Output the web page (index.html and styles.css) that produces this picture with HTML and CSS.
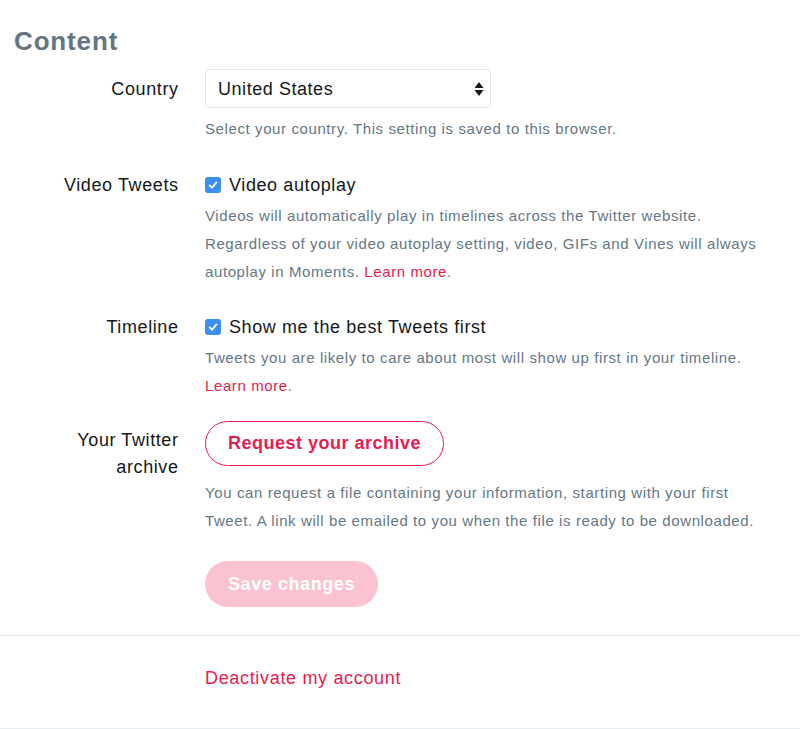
FILE: index.html
```html
<!DOCTYPE html>
<html>
<head>
<meta charset="utf-8">
<link rel="stylesheet" href="styles.css">
</head>
<body>
<div class="page">
  <h2 class="title">Content</h2>

  <div class="row row-country">
    <div class="label label-select">Country</div>
    <div class="field">
      <div class="select-wrap">
        <select class="select"><option>United States</option></select>
        <svg class="select-arrows" width="10" height="16" viewBox="0 0 10 16"><path d="M5 1 L9.5 7 H0.5 Z M5 15 L9.5 9 H0.5 Z" fill="#14171a"/></svg>
      </div>
      <p class="help help-first">Select your country. This setting is saved to this browser.</p>
    </div>
  </div>

  <div class="row row-video">
    <div class="label">Video Tweets</div>
    <div class="field">
      <label class="check">
        <span class="box"><svg width="12" height="12" viewBox="0 0 12 12"><path d="M2.6 6.3 L5 8.7 L9.4 3.4" fill="none" stroke="#fff" stroke-width="1.8" stroke-linecap="round" stroke-linejoin="round"/></svg></span>
        <span>Video autoplay</span>
      </label>
      <p class="help">Videos will automatically play in timelines across the Twitter website.<br>Regardless of your video autoplay setting, video, GIFs and Vines will always autoplay in Moments. <a class="link" href="#">Learn more</a>.</p>
    </div>
  </div>

  <div class="row row-timeline">
    <div class="label">Timeline</div>
    <div class="field">
      <label class="check">
        <span class="box"><svg width="12" height="12" viewBox="0 0 12 12"><path d="M2.6 6.3 L5 8.7 L9.4 3.4" fill="none" stroke="#fff" stroke-width="1.8" stroke-linecap="round" stroke-linejoin="round"/></svg></span>
        <span>Show me the best Tweets first</span>
      </label>
      <p class="help">Tweets you are likely to care about most will show up first in your timeline. <a class="link" href="#">Learn more</a>.</p>
    </div>
  </div>

  <div class="row row-archive">
    <div class="label label-archive">Your Twitter archive</div>
    <div class="field">
      <button class="btn-outline">Request your archive</button>
      <p class="help help-archive">You can request a file containing your information, starting with your first Tweet. A link will be emailed to you when the file is ready to be downloaded.</p>
      <button class="btn-save">Save changes</button>
    </div>
  </div>

  <div class="deactivate">
    <a class="link deactivate-link" href="#">Deactivate my account</a>
  </div>
</div>
</body>
</html>
```

FILE: styles.css
```css
html, body {
  margin: 0;
  padding: 0;
  background: #fff;
}
body {
  font-family: "Liberation Sans", Arial, sans-serif;
  color: #14171a;
  letter-spacing: 0.6px;
}
.page {
  width: 800px;
}
.title {
  margin: 0;
  padding: 25px 0 0 14px;
  font-size: 26px;
  line-height: 32px;
  font-weight: bold;
  color: #66757f;
  letter-spacing: 0.85px;
}
.row {
  display: grid;
  grid-template-columns: 178px 570px;
  column-gap: 27px;
}
.row-country { margin-top: 12px; }
.row-video { margin-top: 28px; }
.row-timeline { margin-top: 27px; }
.row-archive { margin-top: 21px; }
.label {
  text-align: right;
  font-size: 18px;
  line-height: 28px;
  margin-right: -0.6px;
}
.label-select {
  padding-top: 6px;
}
.label-archive {
  padding: 6px 0 0 60px;
  line-height: 27px;
}
.select-wrap {
  position: relative;
  width: 286px;
}
.select {
  -webkit-appearance: none;
  appearance: none;
  width: 286px;
  height: 39px;
  box-sizing: border-box;
  border: 1px solid #e1e8ed;
  border-radius: 5px;
  background: #fff;
  padding: 0 0 0 12px;
  font-family: "Liberation Sans", Arial, sans-serif;
  font-size: 18px;
  letter-spacing: 0.55px;
  color: #14171a;
  display: block;
}
.select-arrows {
  position: absolute;
  right: 7px;
  top: 12px;
}
.help {
  margin: 0;
  font-size: 15px;
  line-height: 28px;
  color: #657786;
}
.help-first { margin-top: 7px; }
.check {
  display: flex;
  align-items: center;
  gap: 8px;
  font-size: 18px;
  line-height: 28px;
  color: #14171a;
  margin-bottom: 3px;
}
.box {
  width: 16px;
  height: 16px;
  border-radius: 3px;
  background: #3b8ff3;
  display: flex;
  align-items: center;
  justify-content: center;
}
.box svg { display: block; }
.link {
  color: #e81c4f;
  text-decoration: none;
}
.btn-outline {
  display: block;
  height: 45px;
  box-sizing: border-box;
  padding: 0 22px;
  border: 1.5px solid #e81c4f;
  border-radius: 23px;
  background: #fff;
  color: #e81c4f;
  font-family: "Liberation Sans", Arial, sans-serif;
  font-size: 18px;
  font-weight: bold;
  letter-spacing: 0.5px;
}
.help-archive { margin-top: 13px; }
.btn-save {
  display: block;
  margin-top: 26px;
  height: 46px;
  padding: 0 23px;
  border: none;
  border-radius: 23px;
  background: #fbc2d2;
  color: #fff;
  font-family: "Liberation Sans", Arial, sans-serif;
  font-size: 18px;
  font-weight: bold;
  letter-spacing: 0.58px;
}
.deactivate {
  margin-top: 28px;
  border-top: 1px solid #e6ecf0;
  border-bottom: 1px solid #e6ecf0;
  padding: 28px 0 36px 205px;
  height: 28px;
}
.deactivate-link {
  font-size: 18px;
  line-height: 28px;
  letter-spacing: 0.67px;
}
```
